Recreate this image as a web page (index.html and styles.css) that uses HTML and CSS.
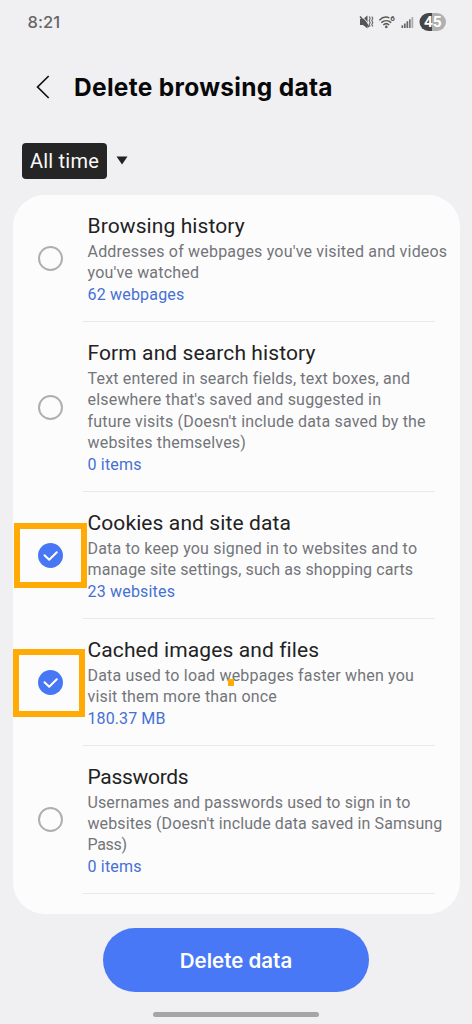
FILE: index.html
```
<!DOCTYPE html>
<html lang="en">
<head>
<meta charset="utf-8">
<title>Delete browsing data</title>
<link rel="stylesheet" href="styles.css">
</head>
<body>
<div class="screen">
  <div class="status">
    <span class="clock">8:21</span>
    <svg class="status-icons" width="88" height="20" viewBox="0 0 88 20">
      <path d="M1 7h3l4.500-3.500v13L4 13H1z" fill="#555"/>
      <path d="M2.500 3.500l8 9.500" stroke="#efeff2" stroke-width="1"/>
      <path d="M1 4.500l9 10.500" stroke="#555" stroke-width="1.500"/>
      <path d="M10.200 4.500l1 2-1 2 1 2-1 2 1 2M12.800 4.500l1 2-1 2 1 2-1 2 1 2" fill="none" stroke="#666" stroke-width="1.100"/>
      <g fill="none" stroke="#5a5a5a" stroke-width="1.500">
        <path d="M20.300 8.200c3.400-3.300 7-3.700 10-2.300M22.300 10.600c2.900-2.600 7-2.600 9.900 0M24.300 13c1.700-1.600 4.200-1.600 5.900 0"/>
      </g>
      <circle cx="27.300" cy="14.900" r="1.300" fill="#5a5a5a"/>
      <text class="wifi-gen" x="31.200" y="9.200">6</text>
      <g fill="#666">
        <path d="M42.500 13.300h1.700V16h-1.700zM45 11.500h1.700V16H45zM47.500 9.300h1.700V16h-1.700z"/>
        <path d="M50 7.300h1.700V16H50z" fill="#777"/>
        <path d="M52.500 5h1.700v11h-1.700z" fill="#aaa"/>
      </g>
      <path d="M69.500 1H73v18h-3.500a9 9 0 0 1 0-18z" fill="#454545"/>
      <path d="M73 1h5a9 9 0 0 1 0 18h-5z" fill="#b0b0b0"/>
      <text class="battery" x="73.800" y="15.400" text-anchor="middle">45</text>
    </svg>
  </div>

  <header class="header">
    <svg class="back" width="14" height="24" viewBox="0 0 14 24"><path d="M12.700 1L1.600 12l11.100 11" fill="none" stroke="#111" stroke-width="1.700"/></svg>
    <h1>Delete browsing data</h1>
  </header>

  <div class="range">
    <span class="range-label">All time</span>
    <svg width="12" height="11" viewBox="0 0 12 11"><path d="M.5.500h11L6 8.500z" fill="#222"/></svg>
  </div>

  <main class="card">
    <section class="row">
      <span class="radio"></span>
      <div class="body">
        <h2>Browsing history</h2>
        <p>Addresses of webpages you've visited and videos<br>you've watched</p>
        <p class="count">62 webpages</p>
      </div>
    </section>
    <section class="row">
      <span class="radio"></span>
      <div class="body">
        <h2>Form and search history</h2>
        <p>Text entered in search fields, text boxes, and<br>elsewhere that's saved and suggested in<br>future visits (Doesn't include data saved by the<br>websites themselves)</p>
        <p class="count">0 items</p>
      </div>
    </section>
    <section class="row">
      <span class="radio checked"><svg width="25" height="25" viewBox="0 0 25 25"><path d="M6.500 12.200l4.700 4.600 7.600-7.600" fill="none" stroke="#fff" stroke-width="2" stroke-linecap="round" stroke-linejoin="round"/></svg></span>
      <span class="highlight highlight-cookies"></span>
      <div class="body">
        <h2>Cookies and site data</h2>
        <p>Data to keep you signed in to websites and to<br><span class="snug">manage site settings, such as shopping carts</span></p>
        <p class="count">23 websites</p>
      </div>
    </section>
    <section class="row">
      <span class="radio checked"><svg width="25" height="25" viewBox="0 0 25 25"><path d="M6.500 12.200l4.700 4.600 7.600-7.600" fill="none" stroke="#fff" stroke-width="2" stroke-linecap="round" stroke-linejoin="round"/></svg></span>
      <span class="highlight highlight-cache"></span>
      <span class="speck"></span>
      <div class="body">
        <h2>Cached images and files</h2>
        <p>Data used to load webpages faster when you<br>visit them more than once</p>
        <p class="count snug">180.37 MB</p>
      </div>
    </section>
    <section class="row">
      <span class="radio"></span>
      <div class="body">
        <h2 class="tight">Passwords</h2>
        <p><span class="snug">Usernames and passwords used to sign in to</span><br><span class="snug">websites (Doesn't include data saved in Samsung</span><br><span class="tight">Pass)</span></p>
        <p class="count">0 items</p>
      </div>
    </section>
  </main>

  <button class="delete">Delete data</button>
  <div class="home-bar"></div>
</div>
</body>
</html>
```
FILE: styles.css
```
* { box-sizing: border-box; }
body { margin: 0; background: #f0f0f3; font-family: Roboto, sans-serif; }
h1, h2, p { margin: 0; white-space: nowrap; }
svg { display: block; }

.screen { width: 472px; height: 1024px; display: flex; flex-direction: column; }

.status {
  height: 44px;
  padding: 0 25px 0 27.500px;
  display: flex;
  align-items: center;
  justify-content: space-between;
}
.clock { font: 500 16.500px Inter, sans-serif; letter-spacing: .1px; color: #666; }
.wifi-gen { font: 700 8px Roboto, sans-serif; fill: #555; }
.battery { font: 700 15.500px Roboto, sans-serif; fill: #fff; }

.header { height: 86px; padding-left: 36px; display: flex; align-items: center; }
.header h1 {
  margin-left: 24px;
  font: 700 24.500px/30px Inter, sans-serif;
  letter-spacing: .300px;
  color: #080808;
}

.range { height: 65px; padding: 13px 0 16px 22px; display: flex; align-items: center; gap: 9px; }
.range-label {
  width: 85px;
  height: 36px;
  border-radius: 4px;
  background: #252525;
  color: #fafafa;
  font-size: 20px;
  line-height: 36px;
  letter-spacing: .24px;
  text-align: center;
}

.card {
  width: 447px;
  height: 719px;
  margin-left: 12.500px;
  border-radius: 32px;
  background: #fcfcfd;
}
.row {
  position: relative;
  display: flex;
  align-items: center;
  padding: 17px 0 15.500px 25.500px;
}
.row::after {
  content: "";
  position: absolute;
  left: 70px;
  right: 25px;
  bottom: 0;
  height: 1px;
  background: #e9e9eb;
}
.radio {
  flex: none;
  width: 25px;
  height: 25px;
  margin-bottom: 1px;
  border: 2px solid #afafb3;
  border-radius: 50%;
}
.radio.checked { border: 0; background: #4777f5; }
.body { margin-left: 24.500px; }
.body h2 { font-size: 21px; line-height: 29px; font-weight: 400; letter-spacing: .1px; color: #222; }
.body p { font-size: 16px; line-height: 21.300px; letter-spacing: .19px; color: #737579; }
.body p.count { padding-top: .500px; color: #4670d3; line-height: 22.400px; }
.body .snug, .body p.snug { letter-spacing: .1px; }
.body .tight { letter-spacing: -.3px; }

.highlight { position: absolute; border: 6px solid #ffaa05; }
.highlight-cookies { left: 1.500px; top: 31.500px; width: 73px; height: 65px; }
.highlight-cache { left: .500px; top: 30.500px; width: 72px; height: 68px; }
.speck { position: absolute; left: 215.500px; top: 60.500px; width: 6px; height: 7px; background: #ffaa05; }

.delete {
  width: 266px;
  height: 64px;
  margin: 14px auto 0;
  border: 0;
  border-radius: 32px;
  background: #4878f6;
  color: #fff;
  font: 600 20.500px Inter, sans-serif;
}
.home-bar { width: 166px; height: 5px; margin: 20px auto 0; border-radius: 3px; background: #a5a5a7; }
```
